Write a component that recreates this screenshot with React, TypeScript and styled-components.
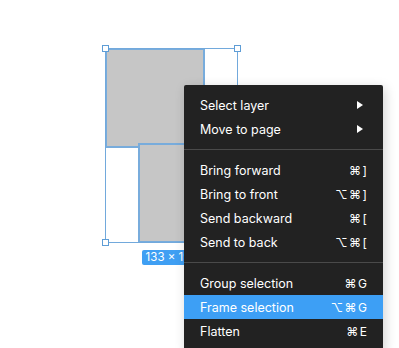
import React from "react";
import styled, { createGlobalStyle } from "styled-components";

const GlobalStyle = createGlobalStyle`
  html, body {
    margin: 0;
    padding: 0;
    background: #ffffff;
    overflow: hidden;
  }
`;

const Canvas = styled.div`
  position: relative;
  width: 399px;
  height: 348px;
  background: #ffffff;
  overflow: hidden;
  font-family: "Inter", "DejaVu Sans", sans-serif;
`;

// free-canvas layers: their position is the content
const Shape = styled.div<{ x: number; y: number }>`
  position: absolute;
  left: ${(p) => p.x}px;
  top: ${(p) => p.y}px;
  width: 100px;
  height: 100px;
  box-sizing: border-box;
  background: #c6c6c6;
  border: 2px solid #78acdc;
`;

const Selection = styled.div`
  position: absolute;
  left: 105px;
  top: 48px;
  width: 133px;
  height: 195px;
  box-sizing: border-box;
  border: 1px solid #72a9dc;
`;

const Handle = styled.div<{ v: "top" | "bottom"; h: "left" | "right" }>`
  position: absolute;
  ${(p) => p.v}: -4px;
  ${(p) => p.h}: -4px;
  width: 7px;
  height: 7px;
  box-sizing: border-box;
  background: #ffffff;
  border: 1px solid #5e9dd6;
`;

const LabelSlot = styled.div`
  position: absolute;
  top: 100%;
  left: 0;
  right: 0;
  margin-top: 8px;
  display: flex;
  justify-content: center;
`;

const SizeLabel = styled.div`
  height: 15px;
  padding: 0 4px;
  background: #3f9ff3;
  color: #ffffff;
  font-size: 11.5px;
  line-height: 15px;
  border-radius: 2px;
  white-space: nowrap;
`;

const Menu = styled.div`
  position: absolute;
  left: 184px;
  top: 85px;
  width: 199px;
  padding: 8px 0;
  background: #222222;
  border-radius: 2px;
  box-shadow: 2px 3px 12px rgba(0, 0, 0, 0.18);
  display: flex;
  flex-direction: column;
`;

const Row = styled.div<{ active?: boolean }>`
  height: 24px;
  display: flex;
  align-items: center;
  justify-content: space-between;
  padding: 0 16px;
  background: ${(p) => (p.active ? "#3d9ff5" : "transparent")};
  color: #ffffff;
  font-size: 12.5px;
`;

const Shortcut = styled.span`
  font-size: 12px;
  letter-spacing: 1.5px;
  margin-right: -1.5px;
`;

const Divider = styled.div`
  height: 1px;
  margin: 8px 0;
  background: #4a4a4a;
`;

const Arrow = styled.svg`
  margin-right: 4px;
`;

type Item = { label: string; key?: string; sub?: boolean; active?: boolean };

const groups: Item[][] = [
  [
    { label: "Select layer", sub: true },
    { label: "Move to page", sub: true },
  ],
  [
    { label: "Bring forward", key: "⌘]" },
    { label: "Bring to front", key: "⌥⌘]" },
    { label: "Send backward", key: "⌘[" },
    { label: "Send to back", key: "⌥⌘[" },
  ],
  [
    { label: "Group selection", key: "⌘G" },
    { label: "Frame selection", key: "⌥⌘G", active: true },
    { label: "Flatten", key: "⌘E" },
  ],
];

const App = () => {
  return (
    <Canvas>
      <GlobalStyle />
      <Shape x={105} y={48} />
      <Shape x={138} y={143} />
      <Selection>
        <Handle v="top" h="left" />
        <Handle v="top" h="right" />
        <Handle v="bottom" h="left" />
        <Handle v="bottom" h="right" />
        <LabelSlot>
          <SizeLabel>133 × 195</SizeLabel>
        </LabelSlot>
      </Selection>
      <Menu>
        {groups.map((g, gi) => (
          <React.Fragment key={gi}>
            {gi > 0 && <Divider />}
            {g.map((it) => (
              <Row key={it.label} active={it.active}>
                <span>{it.label}</span>
                {it.sub ? (
                  <Arrow width="6" height="8" viewBox="0 0 6 8">
                    <path d="M0 0 L6 4 L0 8 Z" fill="#ffffff" />
                  </Arrow>
                ) : (
                  <Shortcut>{it.key}</Shortcut>
                )}
              </Row>
            ))}
          </React.Fragment>
        ))}
      </Menu>
    </Canvas>
  );
};

export default App;
